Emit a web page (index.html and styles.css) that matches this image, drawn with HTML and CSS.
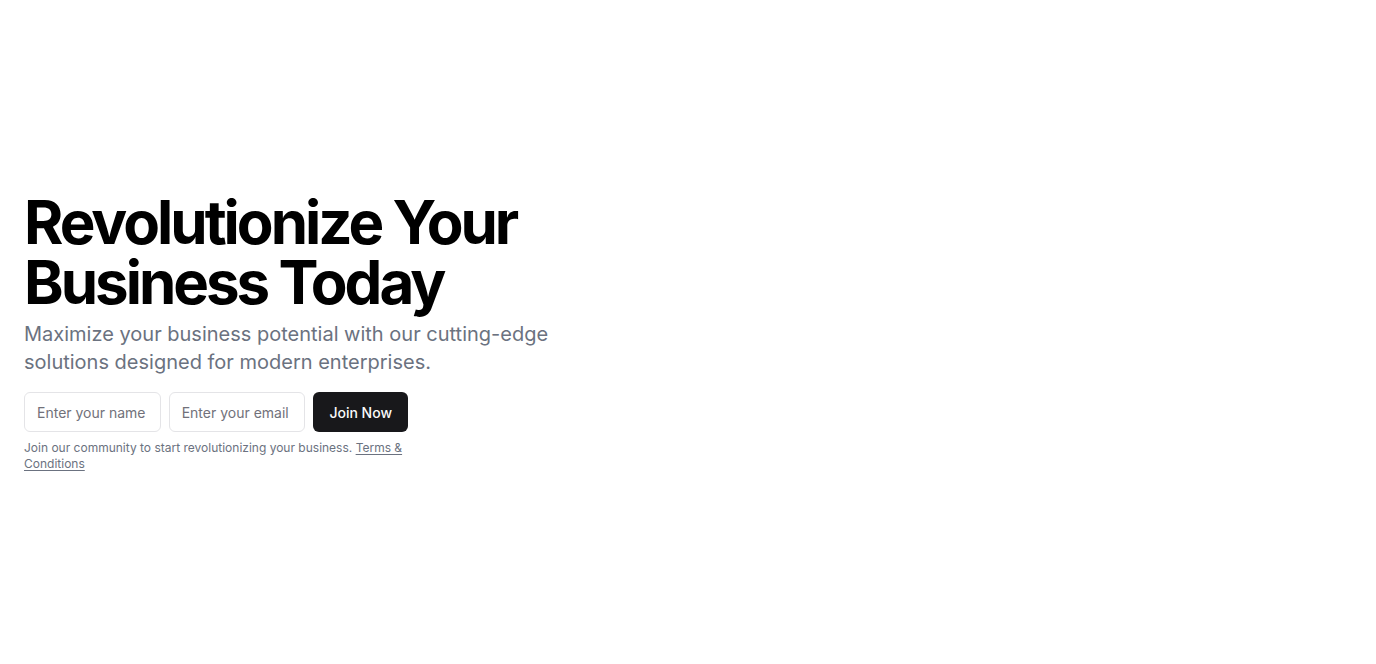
FILE: index.html
```html
<!DOCTYPE html>
<html lang="en">
<head>
<meta charset="utf-8">
<title>Revolutionize Your Business Today</title>
<link rel="stylesheet" href="styles.css">
</head>
<body>
<section class="hero">
  <div class="container">
    <div class="intro">
      <h1 class="title">Revolutionize Your Business Today</h1>
      <p class="lead">Maximize your business potential with our cutting-edge solutions designed for modern enterprises.</p>
    </div>
    <div class="signup">
      <form class="form">
        <input class="input" type="text" placeholder="Enter your name">
        <input class="input" type="email" placeholder="Enter your email">
        <button class="button" type="submit">Join Now</button>
      </form>
      <p class="note">Join our community to start revolutionizing your business. <a class="link" href="#">Terms &amp; Conditions</a></p>
    </div>
  </div>
</section>
</body>
</html>
```
FILE: styles.css
```css
* { box-sizing: border-box; }
html, body { margin: 0; padding: 0; }
body {
  font-family: Inter, "Liberation Sans", sans-serif;
  background: #ffffff;
  color: #09090b;
}
.hero {
  min-height: 100vh;
  display: flex;
  align-items: center;
}
.container {
  width: 100%;
  padding: 0 24px;
  display: flex;
  flex-direction: column;
  gap: 16px;
}
.intro {
  max-width: 600px;
  display: flex;
  flex-direction: column;
  gap: 8px;
}
.title {
  margin: 0;
  font-size: 60px;
  line-height: 1;
  font-weight: 700;
  letter-spacing: -0.05em;
  color: #000;
}
.lead {
  margin: 0;
  font-size: 20px;
  line-height: 28px;
  color: #6b7280;
}
.signup {
  max-width: 384px;
  display: flex;
  flex-direction: column;
  gap: 8px;
}
.form {
  display: flex;
  gap: 8px;
  margin: 0;
}
.input {
  flex: 1 1 0;
  min-width: 0;
  height: 40px;
  padding: 8px 12px;
  border: 1px solid #e4e4e7;
  border-radius: 6px;
  font-family: inherit;
  font-size: 14px;
  color: #09090b;
  background: #fff;
}
.input::placeholder { color: #71717a; }
.button {
  height: 40px;
  padding: 0 16px;
  border: 0;
  border-radius: 6px;
  background: #18181b;
  color: #fafafa;
  font-family: inherit;
  font-size: 14px;
  font-weight: 500;
}
.note {
  margin: 0;
  font-size: 12px;
  line-height: 16px;
  color: #6b7280;
}
.link {
  color: inherit;
  text-decoration: underline;
  text-underline-offset: 2px;
}
```
